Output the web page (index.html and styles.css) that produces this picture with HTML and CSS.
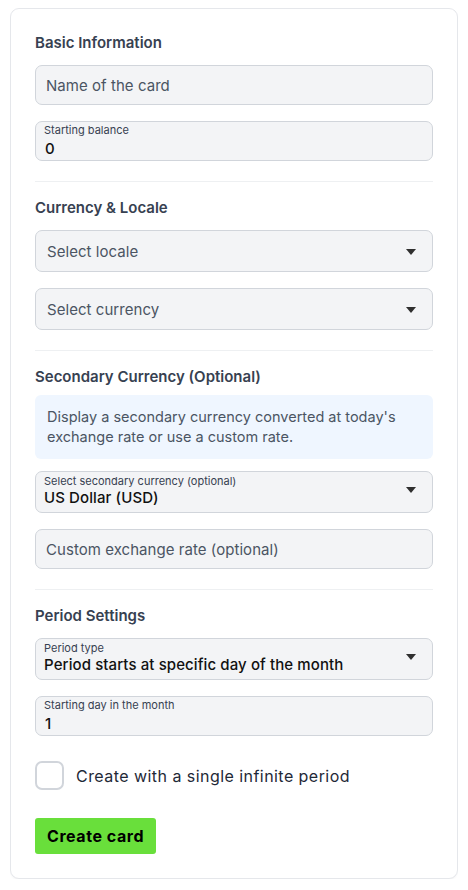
FILE: index.html
```html
<!DOCTYPE html>
<html lang="en">
<head>
<meta charset="utf-8">
<title>Create card</title>
<link rel="stylesheet" href="styles.css">
</head>
<body>
<form class="card">
  <section class="section">
    <h2 class="section-title">Basic Information</h2>
    <div class="field field-plain"><span class="placeholder">Name of the card</span></div>
    <div class="field field-labeled">
      <span class="float-label">Starting balance</span>
      <span class="value value-num">0</span>
    </div>
  </section>

  <section class="section">
    <h2 class="section-title">Currency &amp; Locale</h2>
    <div class="field field-select">
      <span class="placeholder">Select locale</span>
      <span class="caret"></span>
    </div>
    <div class="field field-select">
      <span class="placeholder">Select currency</span>
      <span class="caret"></span>
    </div>
  </section>

  <section class="section">
    <h2 class="section-title title-tight">Secondary Currency (Optional)</h2>
    <p class="info">Display a secondary currency converted at today's exchange rate or use a custom rate.</p>
    <div class="field field-select field-select-labeled">
      <div class="stack">
        <span class="float-label">Select secondary currency (optional)</span>
        <span class="value">US Dollar (USD)</span>
      </div>
      <span class="caret caret-up"></span>
    </div>
    <div class="field field-plain"><span class="placeholder">Custom exchange rate (optional)</span></div>
  </section>

  <section class="section section-last">
    <h2 class="section-title">Period Settings</h2>
    <div class="field field-select field-select-labeled">
      <div class="stack">
        <span class="float-label">Period type</span>
        <span class="value">Period starts at specific day of the month</span>
      </div>
      <span class="caret caret-up"></span>
    </div>
    <div class="field field-labeled">
      <span class="float-label">Starting day in the month</span>
      <span class="value value-num">1</span>
    </div>
    <label class="check-row">
      <span class="checkbox"></span>
      <span class="check-text">Create with a single infinite period</span>
    </label>
    <button type="button" class="btn">Create card</button>
  </section>
</form>
</body>
</html>
```

FILE: styles.css
```css
* {
  box-sizing: border-box;
}

body {
  margin: 8px 10px;
  background: #ffffff;
  font-family: Inter, "Noto Sans", "DejaVu Sans", sans-serif;
  color: #111827;
}

.card {
  width: 448px;
  border: 1px solid #e5e7eb;
  border-radius: 9px;
  background: #ffffff;
  padding: 24px;
  box-shadow: 0 1px 2px rgba(0, 0, 0, 0.04);
}

.section {
  padding: 16px 0 20px;
  border-bottom: 1px solid #eef0f2;
}

.section:first-child {
  padding-top: 0;
}

.section-last {
  border-bottom: none;
  padding-bottom: 0;
}

.section-title {
  margin: 0 0 12px;
  font-size: 15px;
  line-height: 20px;
  font-weight: 600;
  color: #374151;
}

.title-tight {
  margin-bottom: 8px;
}

.field {
  background: #f3f4f6;
  border: 1px solid #d1d5db;
  border-radius: 7px;
  margin-top: 16px;
}

.section-title + .field {
  margin-top: 0;
}

.info + .field {
  margin-top: 12px;
}

.field-plain {
  height: 40px;
  display: flex;
  align-items: center;
  padding: 0 10px;
}

.placeholder {
  font-size: 15px;
  color: #4b5563;
  letter-spacing: 0.05px;
}

.field-labeled {
  height: 40px;
  display: flex;
  flex-direction: column;
  padding: 1px 8px 0;
}

.float-label {
  font-size: 11px;
  line-height: 14px;
  color: #374151;
}

.value {
  font-size: 15px;
  line-height: 20px;
  font-weight: 500;
  color: #111111;
  letter-spacing: 0.1px;
}

.value-num {
  line-height: 23px;
  padding-left: 1px;
}

.field-select {
  height: 42px;
  display: flex;
  align-items: center;
  justify-content: space-between;
  padding: 0 16px 0 11px;
}

.field-select-labeled {
  padding: 2px 16px 4px 8px;
}

.stack {
  display: flex;
  flex-direction: column;
}

.caret {
  width: 0;
  height: 0;
  border-left: 5px solid transparent;
  border-right: 5px solid transparent;
  border-top: 6px solid #2f2f2f;
  margin-top: 2px;
}

.caret-up {
  margin-top: -2px;
}

.info {
  margin: 0;
  background: #eff6ff;
  border-radius: 6px;
  padding: 12px 12px;
  font-size: 14.5px;
  line-height: 20px;
  color: #4b5563;
}

.check-row {
  display: flex;
  align-items: center;
  gap: 12px;
  margin-top: 25px;
  cursor: pointer;
}

.checkbox {
  width: 29px;
  height: 29px;
  border: 2px solid #d1d5db;
  border-radius: 7px;
  background: #ffffff;
  flex: none;
}

.check-text {
  font-size: 16px;
  color: #1f2937;
  letter-spacing: 0.45px;
}

.btn {
  display: block;
  margin-top: 28px;
  height: 36px;
  padding: 0 12px;
  border: none;
  border-radius: 3px;
  background: #69df3b;
  font-family: Inter, "Noto Sans", sans-serif;
  font-size: 16px;
  font-weight: 700;
  letter-spacing: 0.55px;
  color: #000000;
  cursor: pointer;
}
```
